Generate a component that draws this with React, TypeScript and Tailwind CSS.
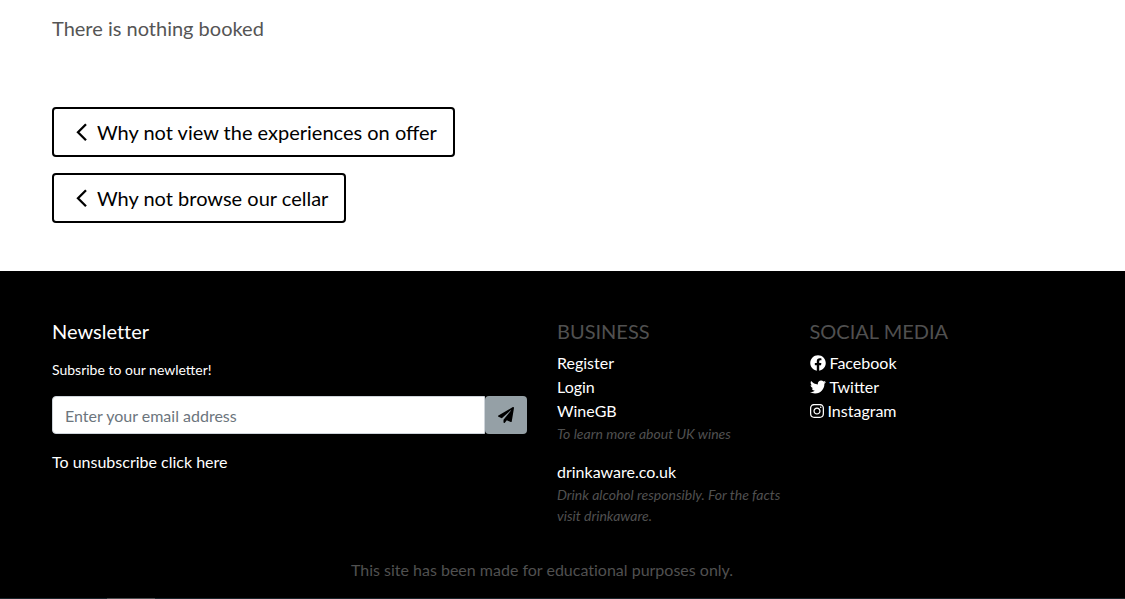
import React from "react";
import { FaFacebook, FaInstagram, FaPaperPlane, FaTwitter } from "react-icons/fa";

function BackLink({ children }: { children: React.ReactNode }) {
  return (
    <a
      href="#"
      className="flex h-[50px] items-center rounded border-2 border-black pl-[21px] pr-4 text-xl text-black"
    >
      <svg viewBox="0 0 14 20" className="mr-2 h-5 w-[14px]" fill="none" stroke="currentColor" strokeWidth="2.3" aria-hidden="true">
        <path d="M11 2.2 3 10.2l8 8" />
      </svg>
      {children}
    </a>
  );
}

function FooterHeading({ children }: { children: React.ReactNode }) {
  return <h2 className="mb-2 text-xl leading-6 text-[#505050] uppercase">{children}</h2>;
}

const social = [
  { name: "Facebook", Icon: FaFacebook, size: "h-4 w-4" },
  { name: "Twitter", Icon: FaTwitter, size: "h-4 w-4" },
  { name: "Instagram", Icon: FaInstagram, size: "h-4 w-[14px]" },
];

export default function App() {
  return (
    <div className="bg-white font-['Lato',sans-serif] text-base leading-6 text-[#555]">
      <main className="pt-4 pr-[93px] pb-12 pl-[52px]">
        <p className="text-xl leading-6">There is nothing booked</p>
        <div className="mt-[67px] flex flex-col items-start gap-4">
          <BackLink>Why not view the experiences on offer</BackLink>
          <BackLink>Why not browse our cellar</BackLink>
        </div>
      </main>

      <footer className="bg-black">
        <div className="pt-12 pr-[78px] pb-4 pl-[37px]">
          <div className="grid grid-cols-4">
            <section className="col-span-2 px-[15px] text-white">
              <h2 className="text-xl leading-6 [font-variant-ligatures:none]">Newsletter</h2>
              <form onSubmit={(e) => e.preventDefault()}>
                <label htmlFor="email" className="mt-4 block text-sm leading-[22px]">
                  Subsribe to our newletter!
                </label>
                <div className="mt-[15px] flex h-[38px]">
                  <input
                    id="email"
                    type="email"
                    placeholder="Enter your email address"
                    className="min-w-0 flex-1 rounded-l border border-[#ced4da] bg-white px-3 pt-[2px] text-base text-[#495057] placeholder:text-[#6c757d]"
                  />
                  <button
                    type="submit"
                    aria-label="Subscribe"
                    className="flex w-[42px] items-center justify-center rounded bg-[#95a0a6] text-black"
                  >
                    <FaPaperPlane className="h-4 w-4" />
                  </button>
                </div>
              </form>
              <a href="#" className="mt-4 block">
                To unsubscribe click here
              </a>
            </section>

            <section className="pr-2 pl-[15px]">
              <FooterHeading>Business</FooterHeading>
              <ul className="text-white">
                <li><a href="#">Register</a></li>
                <li><a href="#">Login</a></li>
                <li><a href="#">WineGB</a></li>
              </ul>
              <p className="text-sm leading-[21px] text-[#505050] italic">To learn more about UK wines</p>
              <a href="#" className="mt-4 block text-white">drinkaware.co.uk</a>
              <p className="text-sm leading-[21px] text-[#505050] italic">
                Drink alcohol responsibly. For the facts visit drinkaware.
              </p>
            </section>

            <section className="px-[15px]">
              <FooterHeading>Social media</FooterHeading>
              <ul className="text-white">
                {social.map(({ name, Icon, size }) => (
                  <li key={name}>
                    <a href="#" className="flex items-center gap-1">
                      <Icon className={size} aria-hidden="true" />
                      {name}
                    </a>
                  </li>
                ))}
              </ul>
            </section>
          </div>
          <p className="mt-8 text-center text-[#505050] [font-variant-ligatures:none]">
            This site has been made for educational purposes only.
          </p>
        </div>
        <div className="flex h-px bg-[#1b262c] pl-[107px]">
          <div className="w-12 bg-[#4b5052]" />
        </div>
      </footer>
    </div>
  );
}
